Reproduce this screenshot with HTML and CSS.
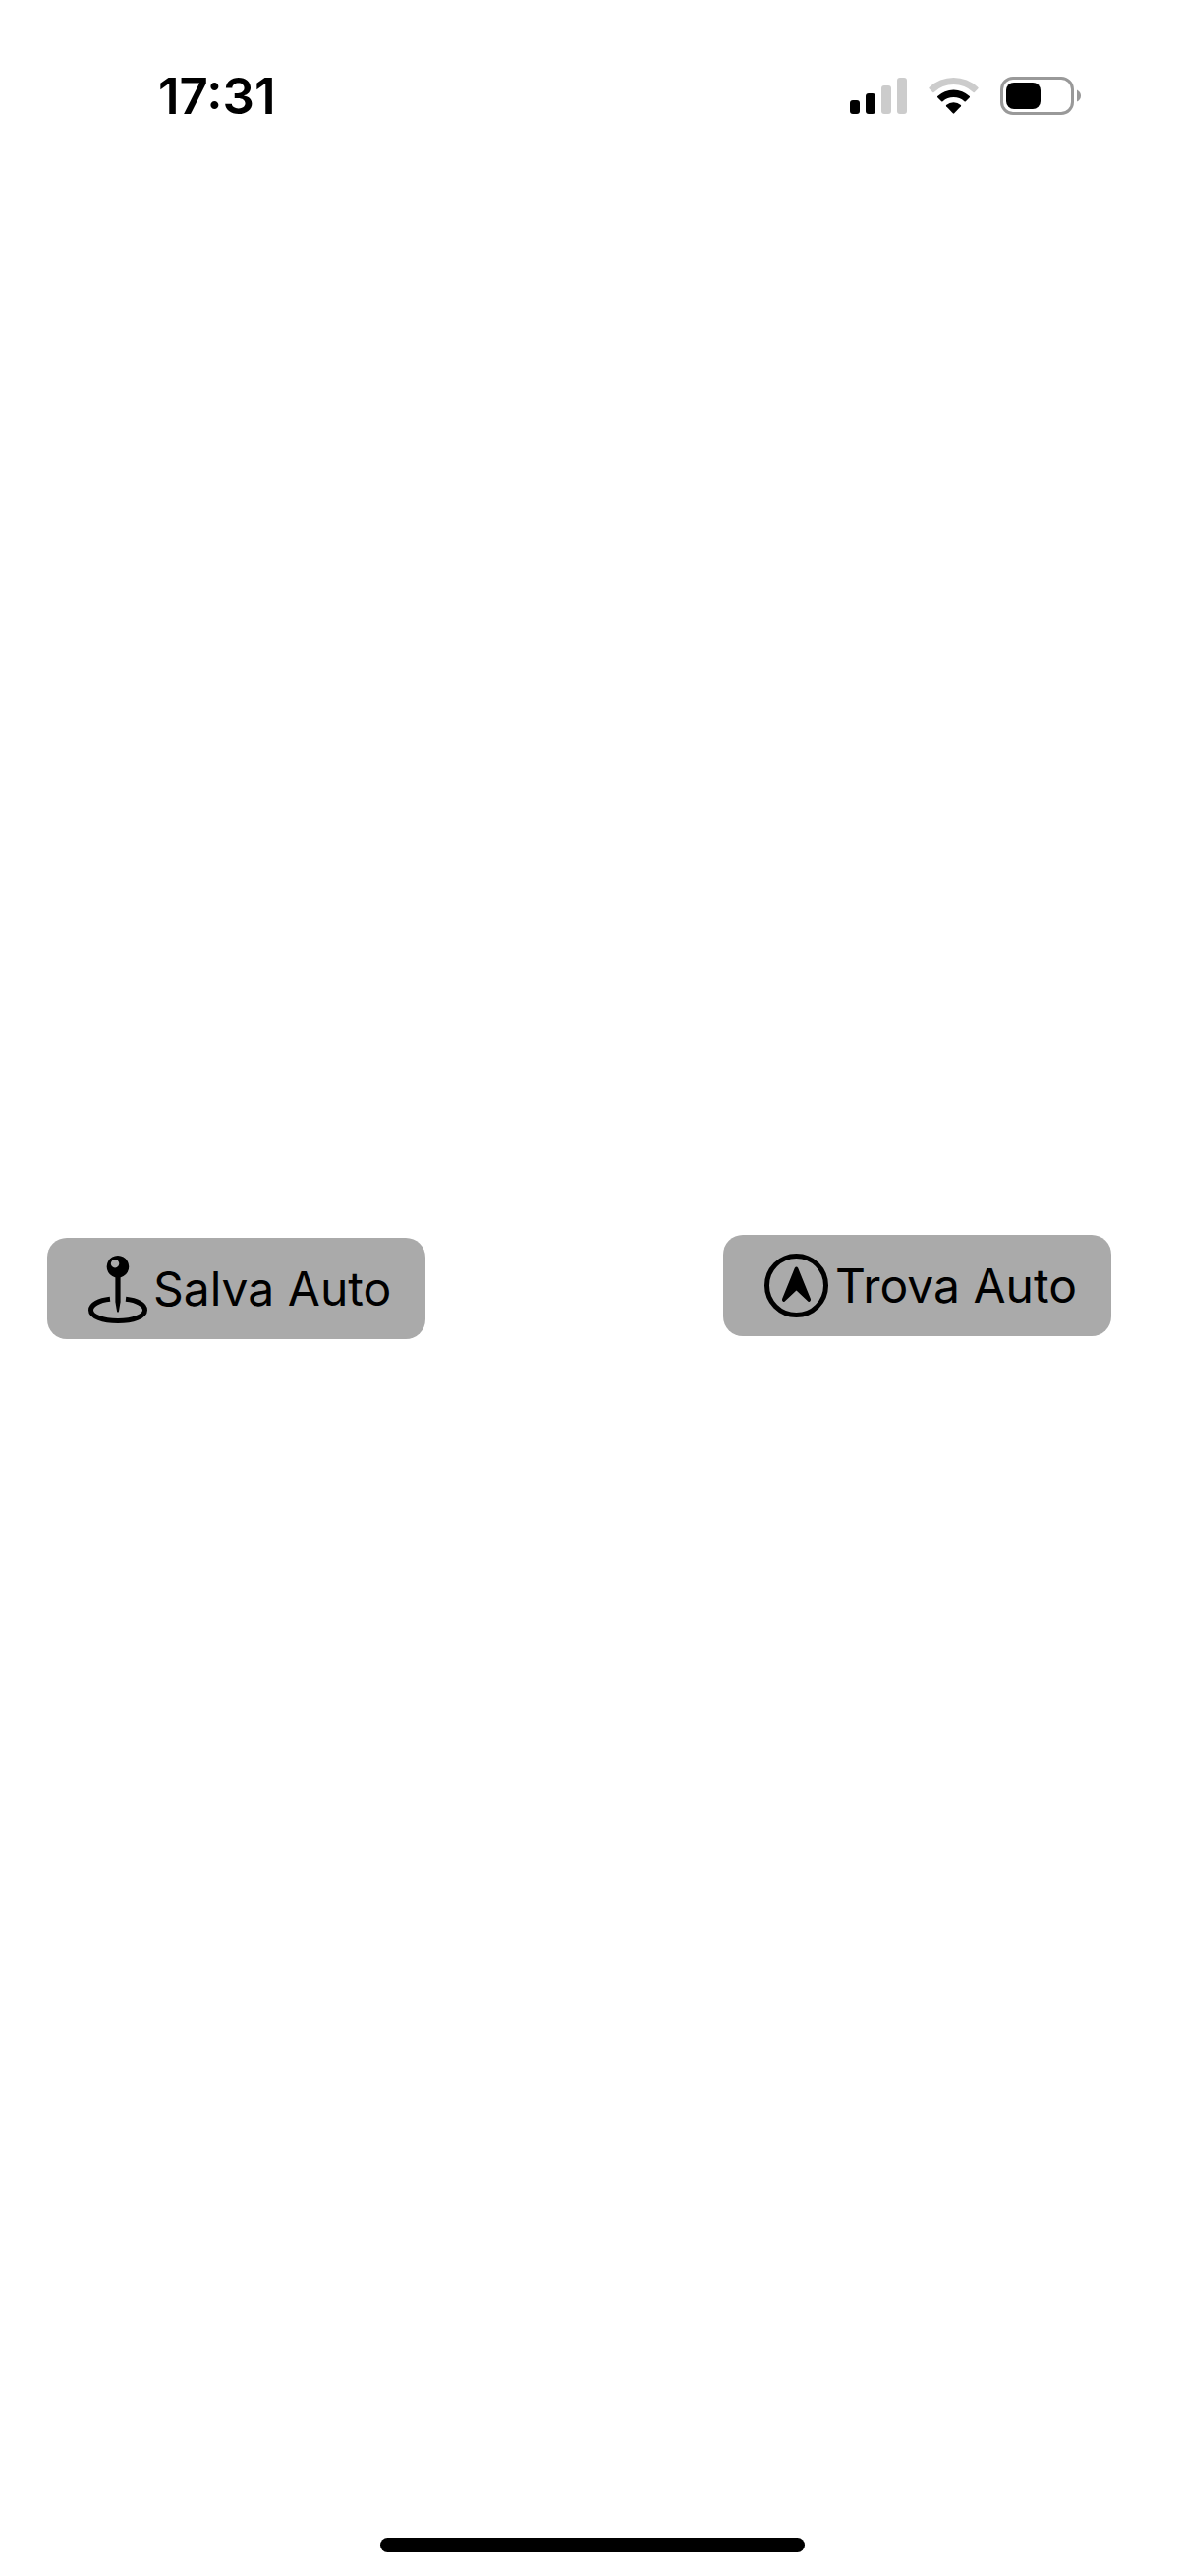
FILE: index.html
```html
<!DOCTYPE html>
<html lang="it">
<head>
<meta charset="utf-8">
<meta name="viewport" content="width=device-width, initial-scale=1">
<title>Trova Auto</title>
<link rel="stylesheet" href="styles.css">
</head>
<body>
<header class="status-bar">
  <time class="clock">17:31</time>
  <div class="indicators">
    <svg class="signal" width="58" height="40" viewBox="0 0 58 40" aria-hidden="true">
      <rect x="0" y="24" width="10" height="14" rx="3"/>
      <rect x="16" y="17" width="10" height="21" rx="3"/>
      <rect class="dim" x="32" y="9" width="10" height="29" rx="3"/>
      <rect class="dim" x="48" y="1" width="10" height="37" rx="3"/>
    </svg>
    <svg class="wifi" width="51" height="40" viewBox="0 0 51 40" aria-hidden="true">
      <path class="dim" d="M.6 11A36 36 0 0 1 50.400 11Q51 11.700 50.400 12.300L46.800 15.900Q46.200 16.500 45.500 15.900A29.500 29.500 0 0 0 5.500 15.900Q4.800 16.500 4.200 15.900L.6 12.300Q0 11.700 .6 11Z"/>
      <path d="M9.200 20.100A23.500 23.500 0 0 1 41.800 20.100Q42.400 20.700 41.800 21.300L37.800 25.200Q37.200 25.800 36.500 25.200A16.500 16.500 0 0 0 14.500 25.200Q13.800 25.800 13.200 25.200L9.200 21.300Q8.600 20.700 9.200 20.100Z"/>
      <path d="M18.100 29A11.500 11.500 0 0 1 32.900 29Q33.500 29.600 32.900 30.300L26.200 37.300Q25.500 38 24.800 37.300L18.100 30.300Q17.500 29.600 18.100 29Z"/>
    </svg>
    <svg class="battery" width="83" height="40" viewBox="0 0 83 40" aria-hidden="true">
      <rect class="shell" x="1.500" y="1.500" width="72" height="36" rx="11.500"/>
      <path class="tip" d="M78 13.500Q82 15.500 82 19.500Q82 23.500 78 25.500Z"/>
      <rect x="6" y="6" width="35" height="27" rx="8"/>
    </svg>
  </div>
</header>
<main class="actions">
  <button class="action save" type="button">
    <svg width="60" height="70" viewBox="0 -1 60 70" aria-hidden="true">
      <path fill-rule="evenodd" d="M30 0A11.300 11.300 0 1 1 29.900 0ZM27 4A4.200 4.200 0 1 0 27.100 4Z"/>
      <path d="M27.400 21H32.600V47L31 56.500Q30 59 29 56.500L27.400 47Z"/>
      <path class="line" d="M22 44.300C10.500 45.500 2.500 50 2.500 55.500C2.500 62 14.500 66.500 30 66.500S57.500 62 57.500 55.500C57.500 50 49.500 45.500 38 44.300"/>
    </svg>
    <span>Salva Auto</span>
  </button>
  <button class="action find" type="button">
    <svg width="66" height="66" viewBox="0 0 66 66" aria-hidden="true">
      <circle class="line" cx="32.500" cy="32.500" r="30"/>
      <path d="M30.800 14.800Q32.500 12.200 34.200 14.800L47 46.300Q47.400 49.800 44.500 48.800L32.500 37.500L20.500 48.800Q17.600 49.800 18 46.300Z"/>
    </svg>
    <span>Trova Auto</span>
  </button>
</main>
<footer class="home-area"><div class="home-indicator"></div></footer>
</body>
</html>
```
FILE: styles.css
```css
* {
  box-sizing: border-box;
}

body {
  display: flex;
  flex-direction: column;
  min-height: 100vh;
  margin: 0;
  background: #fff;
  color: #000;
  font-family: Inter, "Liberation Sans", sans-serif;
}

.status-bar {
  display: flex;
  align-items: center;
  justify-content: space-between;
  height: 160px;
  padding: 36px 105px 0 161px;
}

.clock {
  font-size: 51px;
  font-weight: 600;
  line-height: 60px;
}

.indicators {
  display: flex;
  gap: 22px;
}

.dim {
  fill: #ccc;
}

.shell {
  fill: none;
  stroke: #999;
  stroke-width: 3;
}

.tip {
  fill: #999;
}

.actions {
  display: flex;
  flex: 1;
  align-content: center;
  flex-wrap: wrap;
  justify-content: space-between;
  padding: 0 75px 0 48px;
}

.action {
  display: flex;
  align-items: center;
  gap: 6px;
  height: 103px;
  padding: 0 35px 0 42px;
  border: 0;
  border-radius: 20px;
  background: #aaa;
  color: inherit;
  font: 400 48px/60px Inter, "Liberation Sans", sans-serif;
}

.save {
  margin-top: 3px;
}

.line {
  fill: none;
  stroke: #000;
  stroke-width: 5;
}

.home-area {
  display: flex;
  align-items: flex-end;
  justify-content: center;
  height: 162px;
  padding-bottom: 24px;
}

.home-indicator {
  width: 432px;
  height: 15px;
  border-radius: 8px;
  background: #000;
}
```
